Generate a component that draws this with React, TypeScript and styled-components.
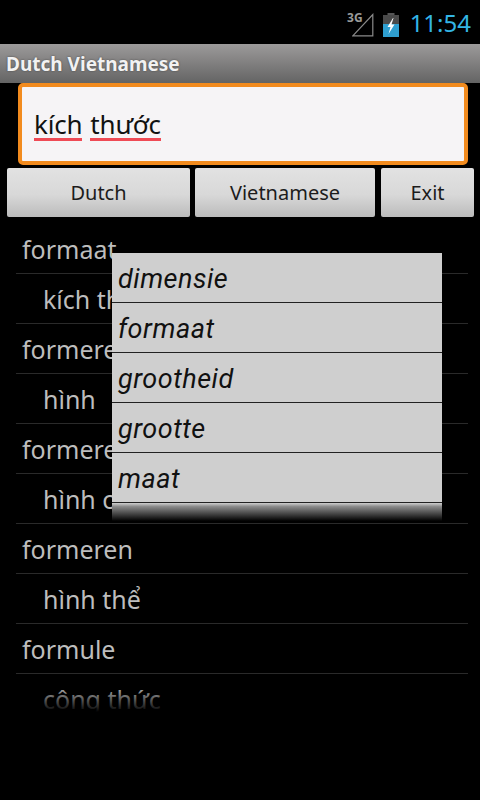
import React from "react";
import styled, {createGlobalStyle} from "styled-components";

const GlobalStyle = createGlobalStyle`
  html, body {
    margin: 0;
    padding: 0;
    background: #000;
  }
`;

const Screen = styled.div`
  position: relative;
  width: 480px;
  height: 800px;
  overflow: hidden;
  background: #000;
  display: flex;
  flex-direction: column;
  font-family: "Noto Sans", Roboto, sans-serif;
`;

const StatusBar = styled.div`
  height: 44px;
  flex: none;
  display: flex;
  align-items: center;
  justify-content: flex-end;
  padding: 0 9px 0 0;
  box-sizing: border-box;
`;

const NetworkLabel = styled.span`
  align-self: flex-start;
  margin: 11px -11px 0 0;
  font-size: 12px;
  line-height: 14px;
  font-weight: 700;
  color: #9a9a9a;
`;

const Clock = styled.span`
  margin-left: 11px;
  font-size: 24px;
  font-weight: 400;
  color: #33b5e5;
`;

const TitleBar = styled.div`
  height: 39px;
  flex: none;
  padding-left: 6px;
  display: flex;
  align-items: center;
  font-size: 19px;
  font-weight: 700;
  color: #f2f2f2;
  background: linear-gradient(#9c9a9a, #646464);
  text-shadow: 0 0 2px #444;
`;

const SearchWrap = styled.div`
  flex: none;
  height: 82px;
  padding: 0 12px 0 18px;
`;

const SearchBox = styled.div`
  height: 82px;
  box-sizing: border-box;
  border: 4px solid #f28b1e;
  border-radius: 5px;
  background: #f6f4f6;
  padding: 3px 0 0 12px;
  display: flex;
  align-items: center;
  gap: 8px;
  font-size: 26px;
  letter-spacing: -0.2px;
  color: #111;
`;

const Misspelled = styled.span`
  line-height: 28px;
  border-bottom: 3px solid #ef4a55;
`;

const ButtonRow = styled.div`
  flex: none;
  display: flex;
  margin-top: 3px;
  padding-left: 7px;
`;

const ActionButton = styled.div<{$w: number; $gap: number}>`
  width: ${(p) => p.$w}px;
  height: 49px;
  margin-right: ${(p) => p.$gap}px;
  display: flex;
  align-items: center;
  justify-content: center;
  border-radius: 2px;
  font-size: 20px;
  color: #1c1c1c;
  background: linear-gradient(#e2e2e2, #d8d8d8 55%, #bbbbbb);
`;

const List = styled.div`
  position: relative;
  flex: none;
  margin-top: 7px;
  height: 488px;
  padding: 0 12px 0 16px;
  overflow: hidden;
`;

const Row = styled.div<{$sub?: boolean}>`
  height: 50px;
  box-sizing: border-box;
  padding-left: ${(p) => (p.$sub ? 27 : 6)}px;
  display: flex;
  align-items: center;
  font-size: 25px;
  white-space: nowrap;
  color: #bdbdbd;
  border-bottom: 1px solid #2a2a2a;

  &:last-of-type {
    border-bottom: 0;
  }
`;

const ListFade = styled.div`
  position: absolute;
  left: 0;
  right: 0;
  bottom: 0;
  height: 27px;
  background: linear-gradient(rgba(0, 0, 0, 0), #000);
`;

const Popup = styled.div`
  position: absolute;
  left: 112px;
  top: 253px;
  width: 330px;
  height: 268px;
  overflow: hidden;
  background: #cfcfcf;
`;

const PopupItem = styled.div`
  height: 50px;
  box-sizing: border-box;
  padding: 2px 0 0 6px;
  display: flex;
  align-items: center;
  font-family: Roboto, "Noto Sans", sans-serif;
  font-size: 27px;
  font-style: italic;
  letter-spacing: 0.5px;
  color: #111;
  border-bottom: 1px solid #222;
`;

const PopupFade = styled.div`
  height: 18px;
  background: linear-gradient(#cfcfcf, #8a8a8a 20%, #000);
`;

const rows: [string, boolean][] = [
    ["formaat", false],
    ["kích thước", true],
    ["formeren", false],
    ["hình", true],
    ["formeren", false],
    ["hình cấu", true],
    ["formeren", false],
    ["hình thể", true],
    ["formule", false],
    ["công thức", true],
];

const popupItems = ["dimensie", "formaat", "grootheid", "grootte", "maat"];

const SignalIcon = () => (
    <svg width="22" height="24" viewBox="0 0 22 24" style={{marginTop: 6}}>
        <path d="M0.8 22.8 L20.8 1.5 V22.8 Z" fill="none" stroke="#8a8a8a" strokeWidth="1.2"/>
    </svg>
);

const BatteryIcon = () => (
    <svg width="16" height="24" viewBox="0 0 16 24" style={{marginLeft: 9, marginTop: 5}}>
        <rect x="4.5" y="0" width="7" height="3" fill="#555"/>
        <rect x="0" y="2" width="16" height="22" fill="#4a4a4a"/>
        <rect x="0" y="11" width="16" height="13" fill="#2f9fd0"/>
        <path d="M10 5 L4.5 14 H7.5 L5.5 21 L11.5 11.5 H8.5 L10.5 5 Z" fill="#fff"/>
    </svg>
);

const App = () => {
    return (
        <Screen>
            <GlobalStyle/>
            <StatusBar>
                <NetworkLabel>3G</NetworkLabel>
                <SignalIcon/>
                <BatteryIcon/>
                <Clock>11:54</Clock>
            </StatusBar>
            <TitleBar>Dutch Vietnamese</TitleBar>
            <SearchWrap>
                <SearchBox>
                    <Misspelled>kích</Misspelled>
                    <Misspelled>thước</Misspelled>
                </SearchBox>
            </SearchWrap>
            <ButtonRow>
                <ActionButton $w={183} $gap={5}>Dutch</ActionButton>
                <ActionButton $w={180} $gap={6}>Vietnamese</ActionButton>
                <ActionButton $w={93} $gap={0}>Exit</ActionButton>
            </ButtonRow>
            <List>
                {rows.map(([text, sub], i) => (
                    <Row key={i} $sub={sub}>{text}</Row>
                ))}
                <ListFade/>
            </List>
            <Popup>
                {popupItems.map((item) => (
                    <PopupItem key={item}>{item}</PopupItem>
                ))}
                <PopupFade/>
            </Popup>
        </Screen>
    );
};

export default App;
